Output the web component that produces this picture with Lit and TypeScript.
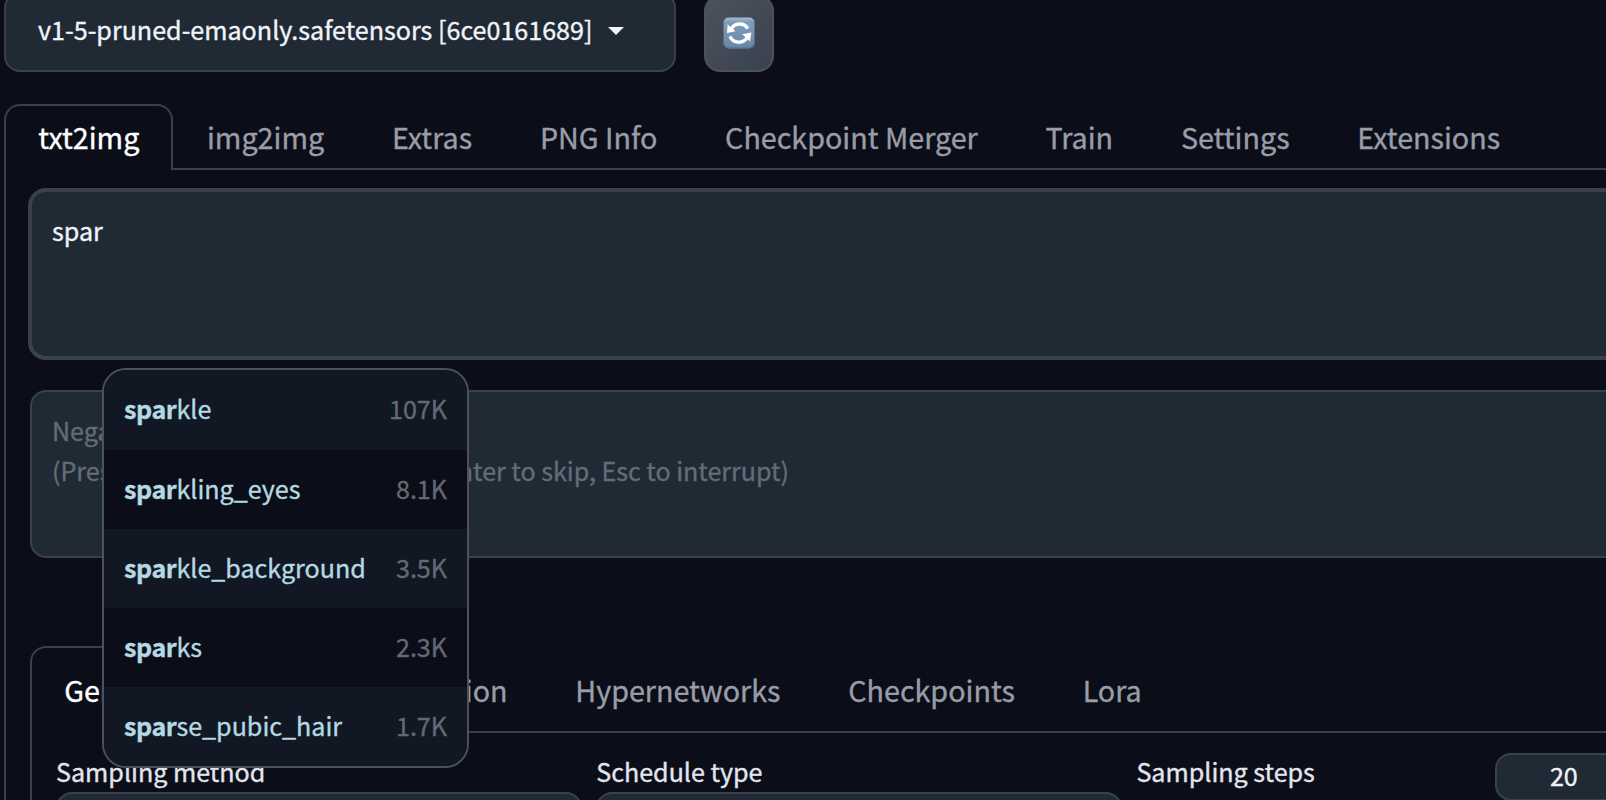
import { LitElement, html, css, svg } from "lit";
import { customElement, property } from "lit/decorators.js";
import { classMap } from "lit/directives/class-map.js";

interface Suggestion {
  match: string;
  rest: string;
  count: string;
}

const MAIN_TABS = ["txt2img", "img2img", "Extras", "PNG Info", "Checkpoint Merger", "Train", "Settings", "Extensions"];
const SUB_TABS = ["Generation", "Textual Inversion", "Hypernetworks", "Checkpoints", "Lora"];
const SUGGESTIONS: Suggestion[] = [
  { match: "spar", rest: "kle", count: "107K" },
  { match: "spar", rest: "kling_eyes", count: "8.1K" },
  { match: "spar", rest: "kle_background", count: "3.5K" },
  { match: "spar", rest: "ks", count: "2.3K" },
  { match: "spar", rest: "se_pubic_hair", count: "1.7K" },
];

@customElement("tab-strip")
class TabStrip extends LitElement {
  @property({ attribute: false }) tabs: string[] = [];

  static styles = css`
    :host {
      display: flex;
      box-sizing: border-box;
      height: var(--strip-height, 66px);
      white-space: nowrap;
    }
    .tab {
      box-sizing: border-box;
      flex: none;
      padding: var(--tab-top, 11.7px) 33.9px 0;
      border-bottom: 2px solid #3b414c;
      font-size: 28.7px;
      line-height: 42px;
      color: #9a9da8;
    }
    .active {
      color: #fff;
      padding: calc(var(--tab-top, 11.7px) - 2px) 31.7px 0 32.2px;
      border: 2px solid #3b414c;
      border-bottom: 0;
      border-radius: 16px 16px 0 0;
    }
    .rest {
      flex: 1;
      border-bottom: 2px solid #3b414c;
    }
  `;

  render() {
    return html`${this.tabs.map(
        (t, i) => html`<div class=${classMap({ tab: true, active: i === 0 })}>${t}</div>`
      )}<div class="rest"></div>`;
  }
}

@customElement("tag-suggestions")
class TagSuggestions extends LitElement {
  static styles = css`
    :host {
      display: block;
      box-sizing: border-box;
      width: 367px;
      height: 400px;
      overflow: hidden;
      border: 2px solid #4d515b;
      border-radius: 24px;
      background: #0b0e18;
    }
    .row {
      box-sizing: border-box;
      display: flex;
      align-items: center;
      justify-content: space-between;
      height: 79.1px;
      padding: 0 20px 2.4px;
      color: #b5d9e3;
    }
    .row:first-child {
      height: 79.6px;
      padding-bottom: 2.8px;
    }
    .row:nth-child(odd) {
      background: #111824;
    }
    b {
      font-weight: 700;
      letter-spacing: -0.4px;
    }
    .count {
      color: #656873;
    }
  `;

  render() {
    return SUGGESTIONS.map(
      (s) => html`<div class="row"><span><b>${s.match}</b>${s.rest}</span><span class="count">${s.count}</span></div>`
    );
  }
}

const refreshIcon = svg`
  <defs>
    <linearGradient id="tile" x1="0" y1="0" x2="0" y2="1">
      <stop offset="0" stop-color="#a3bdd2" />
      <stop offset="0.14" stop-color="#7e9db9" />
      <stop offset="1" stop-color="#6787a6" />
    </linearGradient>
  </defs>
  <rect x="0.5" y="0.5" width="31" height="31" rx="5" fill="url(#tile)" />
  <path d="M1 27 Q2 31 6 31 H26 Q30 31 31 27" fill="none" stroke="#506f8c" stroke-width="1" />
  <g fill="none" stroke="#fff" stroke-width="3.4">
    <path d="M8 12.4 A9.6 9.6 0 0 1 24.8 11.6" />
    <path d="M7 19.4 A9.6 9.6 0 0 0 24 20.6" />
  </g>
  <path d="M4.6 7.4 L4 16 L12.6 14.2 Z M19.2 17.2 L28.4 15.6 L27 24.4 Z" fill="#fff" />
`;

@customElement("app-root")
class AppRoot extends LitElement {
  static styles = css`
    :host {
      display: block;
      position: relative;
      box-sizing: border-box;
      width: 100%;
      height: 800px;
      overflow: hidden;
      background: #0b0e18;
      color: #f0f3f8;
      font-family: "Noto Sans CJK SC", "Source Sans Pro", sans-serif;
      font-size: 25.1px;
      line-height: 40px;
      -webkit-text-stroke: 0.35px currentColor;
    }
    .header {
      display: flex;
      align-items: flex-end;
      gap: 28px;
      height: 72px;
      padding-left: 4px;
    }
    .model {
      box-sizing: border-box;
      flex: none;
      display: flex;
      align-items: center;
      gap: 16px;
      width: 672px;
      height: 80px;
      padding: 0 0 7px 32px;
      border: 2px solid #3b414c;
      border-radius: 16px;
      background: #202a35;
      white-space: nowrap;
    }
    .caret {
      width: 16px;
      height: 8px;
      margin-top: 5px;
    }
    .refresh {
      box-sizing: border-box;
      flex: none;
      display: flex;
      align-items: center;
      justify-content: center;
      width: 70px;
      height: 77px;
      padding-bottom: 1px;
      border: 2px solid #4c515c;
      border-radius: 16px;
      background: linear-gradient(to bottom right, #4c515d, #3a424f);
    }
    .refresh svg {
      width: 32px;
      height: 32px;
    }
    .main {
      padding: 32px 0 0 4px;
    }
    .pane {
      border-left: 2px solid #3b414c;
      height: 630px;
      padding-left: 24px;
    }
    .prompt,
    .negative {
      box-sizing: border-box;
      width: 1700px;
      border: 2px solid #3b414c;
      background: #202a35;
      padding: 18px 20px;
      border-radius: 16px;
    }
    .prompts {
      display: flex;
      flex-direction: column;
      gap: 30px;
      padding-top: 18px;
      margin-left: -2px;
      height: 458px;
    }
    .prompt {
      border-width: 4px;
      height: 172px;
      border-radius: 18px;
    }
    .negative {
      margin-left: 2px;
      height: 168px;
      color: #646c78;
      white-space: pre;
      letter-spacing: -0.02px;
    }
    .settings {
      width: 1700px;
      --strip-height: 87px;
      --tab-top: 22.7px;
    }
    .fields {
      box-sizing: border-box;
      height: 80px;
      border-left: 2px solid #3b414c;
      padding: 18px 0 0 24px;
      display: flex;
      gap: 14.2px;
    }
    .field {
      flex: none;
      width: 526px;
      color: #e3e5ee;
    }
    .select {
      box-sizing: border-box;
      height: 60px;
      margin-top: 1px;
      border: 2px solid #3b414c;
      border-radius: 16px;
      background: #202a35;
    }
    .steps {
      display: flex;
      justify-content: space-between;
      align-items: flex-start;
    }
    .number {
      box-sizing: border-box;
      width: 167px;
      height: 48px;
      margin-top: 2px;
      padding-left: 52.5px;
      border: 2px solid #3b414c;
      border-radius: 16px;
      background: #202a35;
      color: #f0f3f8;
    }
    .popup {
      position: absolute;
      left: 102px;
      top: 368px;
    }
  `;

  render() {
    return html`
      <div class="header">
        <div class="model">
          <span>v1-5-pruned-emaonly.safetensors [6ce0161689]</span>
          <svg class="caret" viewBox="0 0 16 8"><path d="M0 0H16L8 8Z" fill="#f0f3f8" /></svg>
        </div>
        <div class="refresh"><svg viewBox="0 0 32 32">${refreshIcon}</svg></div>
      </div>
      <div class="main">
        <tab-strip .tabs=${MAIN_TABS}></tab-strip>
        <div class="pane">
          <div class="prompts">
            <div class="prompt">spar</div>
            <div class="negative">${"Negative prompt\n(Press Ctrl+Enter to generate, Alt+Enter to skip, Esc to interrupt)"}</div>
          </div>
          <div class="settings">
            <tab-strip .tabs=${SUB_TABS}></tab-strip>
            <div class="fields">
              <div class="field">Sampling method<div class="select"></div></div>
              <div class="field">Schedule type<div class="select"></div></div>
              <div class="field steps"><span>Sampling steps</span><div class="number">20</div></div>
            </div>
          </div>
        </div>
      </div>
      <tag-suggestions class="popup"></tag-suggestions>
    `;
  }
}
